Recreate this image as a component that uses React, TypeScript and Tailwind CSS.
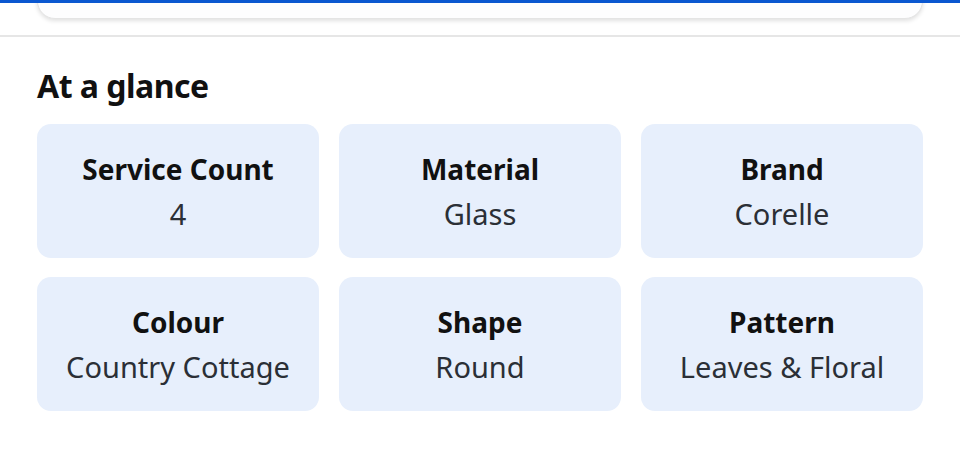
const facts = [
  { label: "Service Count", value: "4" },
  { label: "Material", value: "Glass" },
  { label: "Brand", value: "Corelle" },
  { label: "Colour", value: "Country Cottage" },
  { label: "Shape", value: "Round" },
  { label: "Pattern", value: "Leaves & Floral" },
];

const App = () => (
  <div className="w-[960px] h-[458px] bg-white overflow-hidden" style={{ fontFamily: '"Noto Sans", "Open Sans", sans-serif' }}>
    <div className="relative z-10 h-[3px] bg-[#0a57d0]" />
    <div className="px-[37px] -mt-[20px]">
      <div className="h-[36px] rounded-b-[18px] bg-[#fdfdfe] border border-[#e4e4e4] shadow-[0_2px_4px_rgba(0,0,0,0.12)]" />
    </div>
    <div className="mt-[16px] h-[2px] bg-[#e6e6e6]" />
    <div className="px-[37px]">
      <h2 className="mt-[29px] text-[32px] leading-[40px] font-bold text-[#111] tracking-[-0.5px]">At a glance</h2>
      <div className="mt-[18px] grid grid-cols-3 gap-x-[20px] gap-y-[19px]">
        {facts.map((f) => (
          <div key={f.label} className="h-[134px] rounded-[14px] bg-[#e7effc] flex flex-col items-center justify-center">
            <div className="text-[28px] leading-[36px] font-bold text-[#111]">{f.label}</div>
            <div className="mt-[9px] text-[29px] leading-[36px] text-[#2b2f36]">{f.value}</div>
          </div>
        ))}
      </div>
    </div>
  </div>
);

export default App;
